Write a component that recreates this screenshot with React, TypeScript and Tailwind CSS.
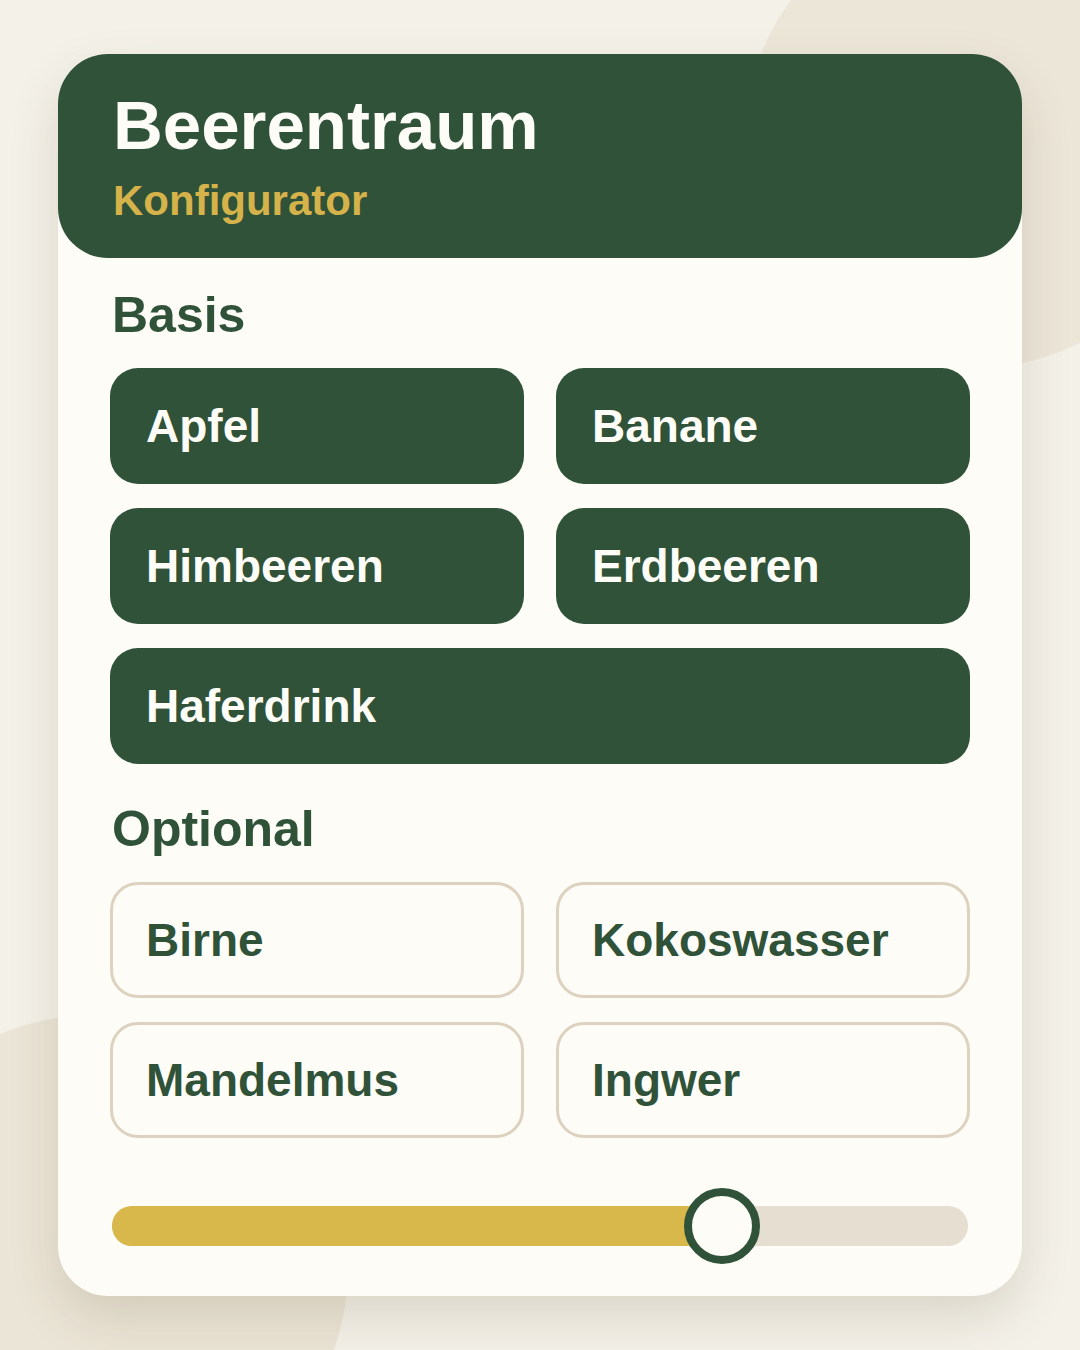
import React from 'react'

type Option = {
  label: string
  wide?: boolean
}

const basis: Option[] = [
  { label: 'Apfel' },
  { label: 'Banane' },
  { label: 'Himbeeren' },
  { label: 'Erdbeeren' },
  { label: 'Haferdrink', wide: true },
]

const optional: Option[] = [
  { label: 'Birne' },
  { label: 'Kokoswasser' },
  { label: 'Mandelmus' },
  { label: 'Ingwer' },
]

// share of the slider track that is filled
const sweetness = 0.7126

function BaseChip({ label, wide }: Option) {
  return (
    <div
      className={
        'flex h-[116px] items-center rounded-[28px] bg-[#2f5239] pl-[36px] text-[46px] font-bold leading-none text-[#fdfcf7]' +
        (wide ? ' col-span-2' : '')
      }
    >
      {label}
    </div>
  )
}

function ExtraChip({ label }: Option) {
  return (
    <div className="flex h-[116px] items-center rounded-[28px] border-[3px] border-[#ddd2bf] bg-[#fdfcf7] pl-[33px] text-[46px] font-bold leading-none text-[#2f5239]">
      {label}
    </div>
  )
}

export default function App() {
  return (
    <div className="relative min-h-[1350px] w-full overflow-hidden bg-[#f4f1e9] font-['Liberation_Sans',Arial,sans-serif]">
      {/* soft background blobs */}
      <div className="absolute left-[745px] top-[-92px] h-[460px] w-[460px] rounded-full bg-[#ece6d9]" />
      <div className="absolute left-[-156px] top-[1015px] h-[504px] w-[504px] rounded-full bg-[#ebe5d7]" />

      <div className="relative px-[58px] pt-[54px]">
        <div className="rounded-[50px] bg-[#fdfcf7] shadow-[0_22px_50px_rgba(90,75,40,0.16)]">
          <div className="rounded-[50px] bg-[#2f5239] pb-[36px] pl-[55px] pr-[52px] pt-[37px]">
            <h1 className="text-[69px] font-bold leading-none text-[#fdfcf7]">Beerentraum</h1>
            <p className="mt-[20px] text-[42px] font-bold leading-none text-[#d6b34a]">Konfigurator</p>
          </div>

          <div className="px-[52px] pb-[50px] pt-[32px]">
            <h2 className="pl-[2px] text-[50px] font-bold leading-none text-[#2f5239]">Basis</h2>
            <div className="mt-[28px] grid grid-cols-2 gap-x-8 gap-y-6">
              {basis.map((o) => (
                <BaseChip key={o.label} {...o} />
              ))}
            </div>

            <h2 className="mt-[40px] pl-[2px] text-[50px] font-bold leading-none text-[#2f5239]">Optional</h2>
            <div className="mt-[28px] grid grid-cols-2 gap-x-8 gap-y-6">
              {optional.map((o) => (
                <ExtraChip key={o.label} {...o} />
              ))}
            </div>

            <div className="relative mx-[2px] mt-[68px] h-[40px] rounded-full bg-[#e6dfd1]">
              <div
                className="h-full rounded-l-full bg-[#d8b74b]"
                style={{ width: `${sweetness * 100}%` }}
              />
              <div
                className="absolute top-1/2 h-[76px] w-[76px] -translate-x-1/2 -translate-y-1/2 rounded-full border-[8px] border-[#2f5239] bg-[#fdfcf7]"
                style={{ left: `${sweetness * 100}%` }}
              />
            </div>
          </div>
        </div>
      </div>
    </div>
  )
}
